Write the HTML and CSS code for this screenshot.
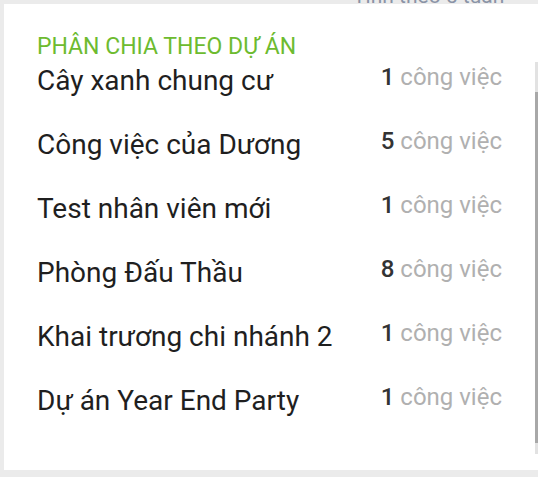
FILE: index.html
```html
<!DOCTYPE html>
<html lang="vi">
<head>
    <meta charset="UTF-8">
    <meta name="viewport" content="width=device-width, initial-scale=1.0">
    <title>Phân chia theo dự án</title>
    <link rel="stylesheet" href="styles.css">
</head>
<body>
    <div class="top-strip">
        <span class="top-note">Tính theo 5 tuần</span>
    </div>
    <div class="project-card">
        <h2 class="card-title">PHÂN CHIA THEO DỰ ÁN</h2>
        <ul class="project-list">
            <li class="project-row">
                <span class="project-name">Cây xanh chung cư</span>
                <span class="project-count"><b>1</b> công việc</span>
            </li>
            <li class="project-row">
                <span class="project-name">Công việc của Dương</span>
                <span class="project-count"><b>5</b> công việc</span>
            </li>
            <li class="project-row">
                <span class="project-name">Test nhân viên mới</span>
                <span class="project-count"><b>1</b> công việc</span>
            </li>
            <li class="project-row">
                <span class="project-name">Phòng Đấu Thầu</span>
                <span class="project-count"><b>8</b> công việc</span>
            </li>
            <li class="project-row">
                <span class="project-name">Khai trương chi nhánh 2</span>
                <span class="project-count"><b>1</b> công việc</span>
            </li>
            <li class="project-row">
                <span class="project-name">Dự án Year End Party</span>
                <span class="project-count"><b>1</b> công việc</span>
            </li>
        </ul>
        <div class="scroll-track">
            <div class="scroll-thumb"></div>
        </div>
    </div>
</body>
</html>
```

FILE: styles.css
```css
* {
    margin: 0;
    padding: 0;
    box-sizing: border-box;
    font-family: 'Roboto', 'Noto Sans', sans-serif;
}

body {
    background: #ebebeb;
    padding: 0 0 7px 4px;
    overflow: hidden;
}

.top-strip {
    height: 4px;
    overflow: hidden;
    position: relative;
}

.top-note {
    position: absolute;
    left: 349px;
    bottom: -2px;
    font-size: 21px;
    line-height: 20px;
    color: #8a93a6;
    white-space: nowrap;
}

.project-card {
    position: relative;
    background: #fff;
    height: 466px;
    padding: 31px 36px 0 33px;
}

.card-title {
    color: #6dbb2f;
    font-size: 23px;
    font-weight: 400;
    line-height: 24px;
    margin-bottom: 6px;
}

.project-list {
    list-style: none;
    display: flex;
    flex-direction: column;
    gap: 32px;
}

.project-row {
    display: flex;
    justify-content: space-between;
    align-items: flex-start;
}

.project-name {
    color: #1f1f1f;
    font-size: 28px;
    line-height: 32px;
}

.project-count {
    color: #b0b0b0;
    font-size: 24px;
    line-height: 24px;
}

.project-count b {
    color: #333;
    font-weight: 500;
}

.scroll-track {
    position: absolute;
    top: 58px;
    right: -1px;
    width: 4px;
    height: 392px;
    background: #e2e2e2;
}

.scroll-thumb {
    margin-top: 30px;
    height: 351px;
    background: #a8a8a8;
}
```
